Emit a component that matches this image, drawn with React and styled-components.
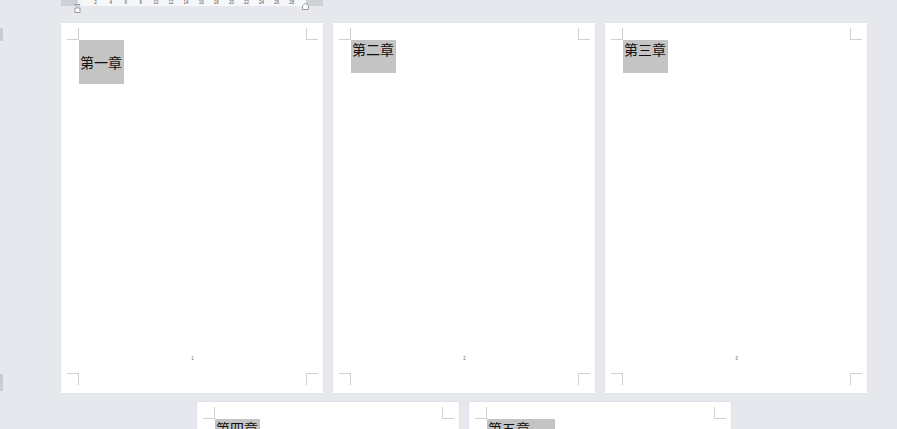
import React from "react";
import styled, { createGlobalStyle } from "styled-components";

const Global = createGlobalStyle`
  html, body { margin: 0; padding: 0; background: #e6e8ee; overflow: hidden; }
  #root { width: 897px; height: 429px; }
`;

const Shell = styled.div`
  display: flex;
  width: 897px;
  height: 429px;
  overflow: hidden;
  background: #e6e8ee;
`;

const SideRuler = styled.div`
  width: 3px;
  display: flex;
  flex-direction: column;
  padding-top: 28px;
`;

const SideMargin = styled.div`
  width: 3px;
  height: ${(p) => p.$h}px;
  margin-top: ${(p) => p.$gap || 0}px;
  background: #c9ccd3;
`;

const Canvas = styled.div`
  display: flex;
  flex-direction: column;
  padding-left: 58px;
`;

const Ruler = styled.div`
  position: relative;
  width: 262px;
  height: 6px;
  display: flex;
  background: #f6f7f9;
  border-radius: 0 0 2px 2px;
`;

const RulerMargin = styled.div`
  width: ${(p) => p.$w}px;
  height: 6px;
  background: #cdd0d7;
`;

const Ticks = styled.div`
  flex: 1;
  display: flex;
  padding-left: 10px;
  gap: 0;
  font-family: "Liberation Sans", Arial, sans-serif;
  font-size: 4.5px;
  line-height: 5px;
  color: #555;
`;

const Tick = styled.span`
  width: 15.1px;
  text-align: center;
`;

const Marker = styled.svg`
  position: absolute;
  top: ${(p) => p.$top}px;
  left: ${(p) => p.$left}px;
`;

const Row = styled.div`
  display: flex;
  justify-content: center;
  gap: 10px;
  width: 806px;
  margin-top: ${(p) => p.$mt}px;
`;

const Page = styled.div`
  width: 262px;
  height: 370px;
  flex: none;
  box-sizing: border-box;
  background: #ffffff;
  padding: 17px 17px 20px 18px;
  display: flex;
  box-shadow: 0 0 0 0.5px #d9dce3;
`;

const TextArea = styled.div`
  position: relative;
  flex: 1;
  display: flex;
  flex-direction: column;
  align-items: flex-start;
`;

const Corner = styled.span`
  position: absolute;
  width: 12px;
  height: 12px;
  box-sizing: border-box;
  border: 0 solid #cfd0d3;
  ${(p) => (p.$v === "t" ? "top: -12px;" : "bottom: -12px;")}
  ${(p) => (p.$h === "l" ? "left: -12px;" : "right: -12px;")}
  ${(p) => (p.$v === "t" ? "border-bottom-width: 1px;" : "border-top-width: 1px;")}
  ${(p) => (p.$h === "l" ? "border-right-width: 1px;" : "border-left-width: 1px;")}
`;

const Heading = styled.div`
  background: #c4c4c4;
  height: ${(p) => p.$h}px;
  width: ${(p) => p.$w}px;
  box-sizing: border-box;
  padding-left: 1px;
  font-family: "Noto Sans CJK SC", "Noto Sans", sans-serif;
  font-size: 14px;
  line-height: ${(p) => p.$lh}px;
  color: #111;
  white-space: nowrap;
`;

const PageNo = styled.div`
  margin-top: auto;
  margin-bottom: 12px;
  align-self: center;
  font-family: "Liberation Sans", Arial, sans-serif;
  font-size: 4.5px;
  color: #666;
`;

const pages = [
  { title: "第一章", h: 44, lh: 44, w: 45, no: "1" },
  { title: "第二章", h: 33, lh: 19, w: 45, no: "2" },
  { title: "第三章", h: 33, lh: 19, w: 45, no: "3" },
];

const pages2 = [
  { title: "第四章", h: 33, lh: 19, w: 45, no: "4" },
  { title: "第五章", h: 33, lh: 19, w: 68, no: "5" },
];

function DocPage({ p }) {
  return (
    <Page>
      <TextArea>
        <Corner $v="t" $h="l" />
        <Corner $v="t" $h="r" />
        <Corner $v="b" $h="l" />
        <Corner $v="b" $h="r" />
        <Heading $h={p.h} $lh={p.lh} $w={p.w}>{p.title}</Heading>
        <PageNo>{p.no}</PageNo>
      </TextArea>
    </Page>
  );
}

export default function App() {
  const nums = [2, 4, 6, 8, 10, 12, 14, 16, 18, 20, 22, 24, 26, 28];
  return (
    <>
      <Global />
      <Shell>
        <SideRuler>
          <SideMargin $h={13} />
          <SideMargin $h={17} $gap={333} />
        </SideRuler>
        <Canvas>
          <Ruler>
            <RulerMargin $w={17} />
            <Ticks>
              {nums.map((n) => (
                <Tick key={n}>{n}</Tick>
              ))}
            </Ticks>
            <RulerMargin $w={17} />
            <Marker $top={4} $left={13} width="7" height="9" viewBox="0 0 7 9">
              <path d="M1 0.5 L6 0.5 L3.5 3 Z" fill="#fff" stroke="#777" strokeWidth="0.7" />
              <rect x="1" y="4" width="5" height="4.5" fill="#fff" stroke="#777" strokeWidth="0.7" />
            </Marker>
            <Marker $top={2} $left={241} width="7" height="8" viewBox="0 0 7 8">
              <path d="M0.5 7.5 L0.5 4 L3.5 1 L6.5 4 L6.5 7.5 Z" fill="#fff" stroke="#777" strokeWidth="0.7" />
            </Marker>
          </Ruler>
          <Row $mt={17}>
            {pages.map((p) => (
              <DocPage key={p.no} p={p} />
            ))}
          </Row>
          <Row $mt={9}>
            {pages2.map((p) => (
              <DocPage key={p.no} p={p} />
            ))}
          </Row>
        </Canvas>
      </Shell>
    </>
  );
}
